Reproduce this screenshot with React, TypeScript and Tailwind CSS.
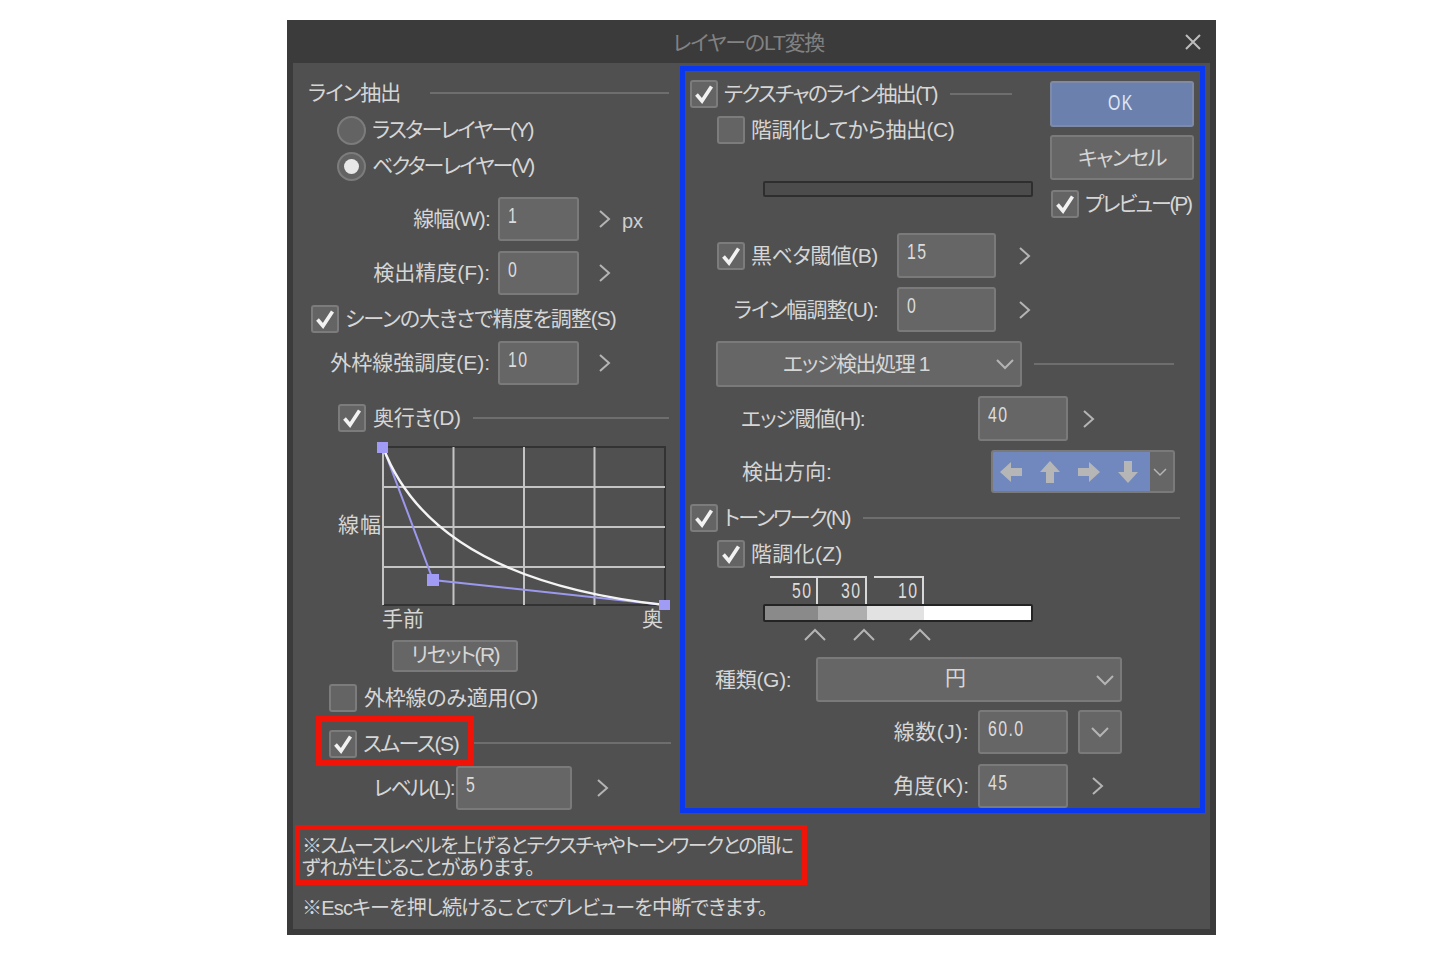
import React from 'react';

const Check: React.FC<{ checked?: boolean; className?: string }> = ({ checked = false, className = '' }) => (
  <div className={`w-[28px] h-[28px] shrink-0 rounded-[3px] border-2 border-[#7c7c7c] bg-[#646464] flex items-center justify-center ${className}`}>
    {checked && (
      <svg width="22" height="22" viewBox="0 0 22 22" fill="none">
        <path d="M3.5 11.5 L9 18 L18.5 3.5" stroke="#f2f2f2" strokeWidth="3.6" />
      </svg>
    )}
  </div>
);

const Chevron: React.FC<{ dir?: 'right' | 'down' | 'up'; className?: string }> = ({ dir = 'right', className = '' }) => {
  const paths = {
    right: 'M2 2 L11 10 L2 18',
    down: 'M2 4 L10 12 L18 4',
    up: 'M1 12 L11 2 L21 12',
  };
  const size = {
    right: [13, 20],
    down: [20, 16],
    up: [22, 14],
  };
  return (
    <svg width={size[dir][0]} height={size[dir][1]} viewBox={`0 0 ${size[dir][0]} ${size[dir][1]}`} fill="none" className={className}>
      <path d={paths[dir]} stroke="#b4b4b4" strokeWidth="2" />
    </svg>
  );
};

// digits in the picture are tall and narrow
const Digits: React.FC<{ children: React.ReactNode }> = ({ children }) => (
  <span className="inline-block origin-left scale-x-[0.72] whitespace-nowrap text-[22px] tracking-[2px] font-['Liberation_Sans',sans-serif]">{children}</span>
);

const NumInput: React.FC<{ value: string; className?: string }> = ({ value, className = '' }) => (
  <div className={`h-[44px] shrink-0 rounded-[3px] border-2 border-[#7a7a7a] bg-[#666666] pl-[8px] pt-[3px] leading-[28px] text-[#dcdcdc] ${className}`}>
    <Digits>{value}</Digits>
  </div>
);

const Rule: React.FC<{ className?: string }> = ({ className = '' }) => (
  <div className={`h-[2px] bg-[#6e6e6e] ${className}`} />
);

const Label: React.FC<{ children: React.ReactNode; className?: string }> = ({ children, className = '' }) => (
  <span className={`whitespace-nowrap text-[21px] leading-[28px] text-[#d6d6d6] ${className}`}>{children}</span>
);

const Graph: React.FC = () => (
  <svg width="297" height="170" viewBox="375 440 297 170" fill="none" className="shrink-0">
    <path d="M383 447 H665 V605 H383" stroke="#333333" strokeWidth="2" />
    <path d="M383 447 V605 M453.5 447 V605 M524 447 V605 M594.5 447 V605 M383 487 H665 M383 527 H665 M383 567 H665" stroke="#c4c4c4" strokeWidth="2" />
    <path d="M383 447 L433 580 L665 605" stroke="#9c98ee" strokeWidth="2" />
    <path d="M383 447 Q433 580 665 605" stroke="#f4f4f4" strokeWidth="2.4" />
    <rect x="377" y="442" width="11" height="11" fill="#a09cf6" />
    <rect x="427" y="574" width="12" height="12" fill="#a09cf6" />
    <rect x="659" y="600" width="11" height="11" fill="#a09cf6" />
  </svg>
);

const Arrow: React.FC<{ rotate: string }> = ({ rotate }) => (
  <svg width="24" height="22" viewBox="0 0 24 22" className={rotate}>
    <path d="M1 11 L12 1 V7 H23 V15 H12 V21 Z" fill="#b6b6b6" />
  </svg>
);

const LeftColumn: React.FC = () => (
  <div className="w-[388px] shrink-0 pt-[12px]">
    <div className="h-[36px] flex items-center pl-[15px]">
      <Label className="w-[122px] tracking-[-1px]">ライン抽出</Label>
      <Rule className="w-[239px]" />
    </div>
    <div className="mt-[1px] h-[36px] flex items-center pl-[44px]">
      <div className="w-[29px] h-[29px] rounded-full border-2 border-[#7c7c7c] bg-[#636363]" />
      <Label className="ml-[6px] tracking-[-1.8px]">ラスターレイヤー(Y)</Label>
    </div>
    <div className="h-[36px] flex items-center pl-[44px]">
      <div className="w-[29px] h-[29px] rounded-full border-2 border-[#7c7c7c] bg-[#636363] flex items-center justify-center">
        <div className="w-[15px] h-[15px] rounded-full bg-[#e8e8e8]" />
      </div>
      <Label className="ml-[6px] tracking-[-2px]">ベクターレイヤー(V)</Label>
    </div>
    <div className="mt-[13px] flex items-center">
      <Label className="w-[197px] text-right tracking-[-0.8px]">線幅(W):</Label>
      <NumInput value="1" className="ml-[8px] w-[81px]" />
      <Chevron className="ml-[19px]" />
      <span className="ml-[11px] mt-[4px] text-[20px] text-[#cfcfcf]">px</span>
    </div>
    <div className="mt-[10px] flex items-center">
      <Label className="w-[197px] text-right">検出精度(F):</Label>
      <NumInput value="0" className="ml-[8px] w-[81px]" />
      <Chevron className="ml-[19px]" />
    </div>
    <div className="mt-[10px] flex items-center pl-[18px]">
      <Check checked />
      <Label className="ml-[6px] tracking-[-1px]">シーンの大きさで精度を調整(S)</Label>
    </div>
    <div className="mt-[8px] flex items-center">
      <Label className="w-[197px] text-right">外枠線強調度(E):</Label>
      <NumInput value="10" className="ml-[8px] w-[81px]" />
      <Chevron className="ml-[19px]" />
    </div>
    <div className="mt-[19px] flex items-center pl-[45px]">
      <Check checked />
      <Label className="ml-[7px] w-[100px] tracking-[-0.3px]">奥行き(D)</Label>
      <Rule className="w-[196px]" />
    </div>
    <div className="mt-[8px] flex items-center pl-[45px]">
      <Label className="w-[37px] tracking-[1px]">線幅</Label>
      <Graph />
    </div>
    <div className="-mt-[1px] h-[20px] flex items-center justify-between pl-[89px] pr-[18px]">
      <Label>手前</Label>
      <Label>奥</Label>
    </div>
    <div className="mt-[11px] ml-[99px] w-[126px] h-[32px] rounded-[3px] border-2 border-[#7a7a7a] bg-[#666666] flex items-center justify-center pb-[3px]">
      <Label className="tracking-[-1.6px]">リセット(R)</Label>
    </div>
    <div className="mt-[12px] flex items-center pl-[36px]">
      <Check />
      <Label className="ml-[7px] tracking-[-0.2px]">外枠線のみ適用(O)</Label>
    </div>
    <div className="mt-[4px] flex items-center pl-[23px]">
      <div className="w-[158px] h-[50px] border-[6px] border-[#f01408] flex items-center pl-[7px] pt-[5px]">
        <Check checked />
        <Label className="ml-[6px] tracking-[-1.4px]">スムース(S)</Label>
      </div>
      <Rule className="w-[197px] mt-[4px]" />
    </div>
    <div className="flex items-center">
      <Label className="w-[161px] text-right tracking-[-1.5px]">レベル(L):</Label>
      <NumInput value="5" className="ml-[2px] w-[116px]" />
      <Chevron className="ml-[24px]" />
    </div>
  </div>
);

const RightColumn: React.FC = () => (
  <div className="w-[525px] h-[747px] shrink-0 mt-[3px] -ml-[1px] border-[5px] border-[#0a38f0] overflow-hidden">
    <div className="flex h-[162px]">
      <div className="w-[365px] pl-[5px] pt-[9px]">
        <div className="flex items-center">
          <Check checked />
          <Label className="ml-[6px] w-[226px] tracking-[-1.7px]">テクスチャのライン抽出(T)</Label>
          <Rule className="w-[62px]" />
        </div>
        <div className="mt-[8px] ml-[27px] flex items-center">
          <Check />
          <Label className="ml-[6px] tracking-[-0.5px]">階調化してから抽出(C)</Label>
        </div>
        <div className="mt-[37px] ml-[73px] w-[270px] h-[16px] rounded-[2px] border-2 border-[#2e2e2e] bg-[#4c4c4c]" />
      </div>
      <div className="w-[144px] pt-[10px]">
        <div className="h-[46px] rounded-[3px] border-2 border-[#7f8ba6] bg-[#6c80ad] flex items-center pl-[56px] pb-[3px] text-[#dfe6f2]">
          <Digits>OK</Digits>
        </div>
        <div className="mt-[8px] h-[45px] rounded-[3px] border-2 border-[#7a7a7a] bg-[#666666] flex items-center justify-center">
          <Label className="tracking-[-1.4px]">キャンセル</Label>
        </div>
        <div className="mt-[10px] ml-[1px] flex items-center">
          <Check checked />
          <Label className="ml-[6px] tracking-[-2.2px]">プレビュー(P)</Label>
        </div>
      </div>
    </div>

    <div className="flex items-center pl-[32px]">
      <Check checked />
      <Label className="ml-[6px] w-[127px] tracking-[-0.5px]">黒ベタ閾値(B)</Label>
      <NumInput value="15" className="ml-[19px] w-[99px] h-[45px]" />
      <Chevron className="ml-[22px]" />
    </div>
    <div className="mt-[9px] ml-[1px] flex items-center">
      <Label className="w-[192px] text-right tracking-[-0.9px]">ライン幅調整(U):</Label>
      <NumInput value="0" className="ml-[19px] w-[99px] h-[45px]" />
      <Chevron className="ml-[22px]" />
    </div>
    <div className="mt-[9px] ml-[31px] flex items-center">
      <div className="w-[306px] h-[46px] rounded-[3px] border-2 border-[#7a7a7a] bg-[#666666] flex items-center justify-between pl-[65px] pr-[5px]">
        <Label className="tracking-[-1.4px]">エッジ検出処理 1</Label>
        <Chevron dir="down" />
      </div>
      <Rule className="ml-[12px] w-[140px]" />
    </div>
    <div className="mt-[9px] flex items-center pl-[56px]">
      <Label className="w-[237px] tracking-[-1.2px]">エッジ閾値(H):</Label>
      <NumInput value="40" className="w-[90px] h-[45px]" />
      <Chevron className="ml-[14px]" />
    </div>
    <div className="mt-[9px] flex items-center pl-[57px]">
      <Label className="w-[249px]">検出方向:</Label>
      <div className="w-[184px] h-[43px] rounded-[3px] border-2 border-[#7a7a7a] bg-[#666666] flex items-center overflow-hidden">
        <div className="w-[157px] h-full bg-[#7088bd] flex items-center gap-[15px] pl-[6px]">
          <Arrow rotate="" />
          <Arrow rotate="rotate-90" />
          <Arrow rotate="rotate-180" />
          <Arrow rotate="-rotate-90" />
        </div>
        <Chevron dir="down" className="scale-75" />
      </div>
    </div>
    <div className="mt-[11px] flex items-center pl-[5px]">
      <Check checked />
      <Label className="ml-[6px] w-[139px] tracking-[-1.8px]">トーンワーク(N)</Label>
      <Rule className="w-[317px]" />
    </div>
    <div className="mt-[8px] flex items-center pl-[32px]">
      <Check checked />
      <Label className="ml-[6px] tracking-[0.3px]">階調化(Z)</Label>
    </div>

    <div className="mt-[8px] ml-[85px] flex h-[28px] leading-[26px] text-[#dcdcdc]">
      <div className="w-[48px] border-t-2 border-r-2 border-[#d8d8d8] pl-[22px]"><Digits>50</Digits></div>
      <div className="w-[49px] border-t-2 border-r-2 border-[#d8d8d8] pl-[23px]"><Digits>30</Digits></div>
      <div className="ml-[7px] w-[50px] border-t-2 border-r-2 border-[#d8d8d8] pl-[24px]"><Digits>10</Digits></div>
    </div>
    <div className="ml-[78px] w-[270px] h-[18px] rounded-[2px] border-2 border-[#242424] flex">
      <div className="w-[53px] bg-[#8a8a8a]" />
      <div className="w-[49px] bg-[#aeaeae]" />
      <div className="w-[57px] bg-[#e2e2e2]" />
      <div className="flex-1 bg-white" />
    </div>
    <div className="mt-[6px] ml-[119px] flex h-[14px]">
      <Chevron dir="up" />
      <Chevron dir="up" className="ml-[27px]" />
      <Chevron dir="up" className="ml-[34px]" />
    </div>

    <div className="mt-[15px] flex items-center pl-[30px]">
      <Label className="w-[101px] tracking-[-0.3px]">種類(G):</Label>
      <div className="w-[306px] h-[45px] rounded-[3px] border-2 border-[#7a7a7a] bg-[#666666] flex items-center justify-between pl-[127px] pr-[5px]">
        <Label className="pb-[3px]">円</Label>
        <Chevron dir="down" />
      </div>
    </div>
    <div className="mt-[8px] ml-[1px] flex items-center">
      <Label className="w-[283px] text-right tracking-[0.5px]">線数(J):</Label>
      <NumInput value="60.0" className="ml-[9px] w-[90px]" />
      <div className="ml-[10px] w-[44px] h-[44px] rounded-[3px] border-2 border-[#7a7a7a] bg-[#666666] flex items-center justify-center">
        <Chevron dir="down" />
      </div>
    </div>
    <div className="mt-[10px] ml-[1px] flex items-center">
      <Label className="w-[283px] text-right">角度(K):</Label>
      <NumInput value="45" className="ml-[9px] w-[90px]" />
      <Chevron className="ml-[23px]" />
    </div>
  </div>
);

export default function App() {
  return (
    <div className="min-h-screen bg-white pt-[20px] pl-[287px] font-['Liberation_Sans','Noto_Sans_CJK_JP',sans-serif] [font-feature-settings:'palt']">
      <div className="w-[929px] h-[915px] bg-[#3b3b3b]">
        <div className="h-[43px] relative flex items-center justify-center pr-[6px] pt-[2px]">
          <span className="text-[21px] tracking-[-1.2px] text-[#828282]">レイヤーのLT変換</span>
          <svg width="18" height="18" viewBox="0 0 18 18" className="absolute right-[14px] top-[13px]" fill="none">
            <path d="M2 2 L16 16 M16 2 L2 16" stroke="#bdbdbd" strokeWidth="2" />
          </svg>
        </div>
        <div className="mx-[6px] h-[866px] bg-[#505050]">
          <div className="flex">
            <LeftColumn />
            <RightColumn />
          </div>
          <div className="mt-[12px] ml-[2px] w-[512px] h-[60px] border-[5px] border-[#f01408] pl-[2px] pt-[5px] text-[20px] leading-[22px] text-[#d6d6d6]">
            <div className="whitespace-nowrap tracking-[-1.5px]">※スムースレベルを上げるとテクスチャやトーンワークとの間に</div>
            <div className="whitespace-nowrap tracking-[-1.2px]">ずれが生じることがあります。</div>
          </div>
          <div className="mt-[9px] ml-[9px] whitespace-nowrap text-[20px] leading-[28px] tracking-[-0.8px] text-[#d6d6d6]">※Escキーを押し続けることでプレビューを中断できます。</div>
        </div>
      </div>
    </div>
  );
}
